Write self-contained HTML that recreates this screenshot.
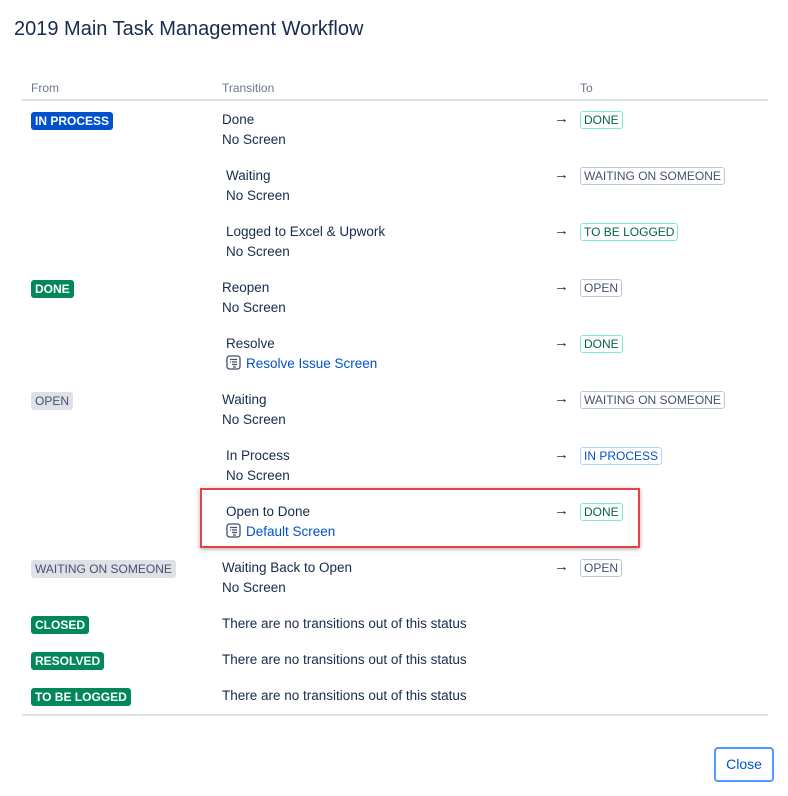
<!DOCTYPE html>
<html><head><meta charset="utf-8"><style>
body{margin:0;width:788px;height:796px;background:#fff;font-family:"Liberation Sans",sans-serif;color:#172b4d;position:relative;overflow:hidden}
.a{position:absolute;white-space:nowrap}
.t{font-size:13.5px;line-height:20px}
.h{font-size:12px;color:#6b778c;line-height:14px}
.lz{position:absolute;font-size:12px;line-height:16px;padding:1px 4px;border-radius:3px;text-transform:uppercase;white-space:nowrap}
.s{font-weight:bold;color:#fff}
.b{background:#0052cc}.g{background:#00875a}.gr{background:#dfe1e6;color:#42526e}
.o{border:1px solid #c1c7d0;color:#42526e;padding:0 3px}
.og{border-color:#79f2c0;color:#006644}
.ob{border-color:#b3d4ff;color:#0052cc}
.lk{color:#0052cc}
.arr{position:absolute;font-size:15px;line-height:18px;left:554px}
.ic{display:inline-block;vertical-align:-2px;margin-right:5px}
</style></head><body>
<div class="a" style="left:14px;top:17px;font-size:20px;line-height:24px;color:#172b4d">2019 Main Task Management Workflow</div>
<div class="a h" style="left:31px;top:81px">From</div>
<div class="a h" style="left:222px;top:81px">Transition</div>
<div class="a h" style="left:580px;top:81px">To</div>
<div class="a" style="left:22px;top:99px;width:746px;height:2px;background:#dfe1e6"></div>

<div class="lz s b" style="left:31px;top:112px">In Process</div>
<div class="lz s g" style="left:31px;top:280px">Done</div>
<div class="lz gr" style="left:31px;top:392px">Open</div>
<div class="lz gr" style="left:31px;top:560px">Waiting on someone</div>
<div class="lz s g" style="left:31px;top:616px">Closed</div>
<div class="lz s g" style="left:31px;top:652px">Resolved</div>
<div class="lz s g" style="left:31px;top:688px">To be logged</div>

<div class="a t" style="left:222px;top:110px">Done<br>No Screen</div>
<div class="a t" style="left:226px;top:166px">Waiting<br>No Screen</div>
<div class="a t" style="left:226px;top:222px">Logged to Excel &amp; Upwork<br>No Screen</div>
<div class="a t" style="left:222px;top:278px">Reopen<br>No Screen</div>
<div class="a t" style="left:226px;top:334px">Resolve<br><svg class="ic" width="15" height="15" viewBox="0 0 15 15"><rect x="1" y="1" width="13" height="13" rx="2.5" fill="none" stroke="#42526e" stroke-width="1.3"/><path d="M4 4.5h7M6 7h5M6 9.5h5M4 7h1M7 12h3" stroke="#42526e" stroke-width="1.2"/></svg><span class="lk">Resolve Issue Screen</span></div>
<div class="a t" style="left:222px;top:390px">Waiting<br>No Screen</div>
<div class="a t" style="left:226px;top:446px">In Process<br>No Screen</div>
<div class="a t" style="left:226px;top:502px">Open to Done<br><svg class="ic" width="15" height="15" viewBox="0 0 15 15"><rect x="1" y="1" width="13" height="13" rx="2.5" fill="none" stroke="#42526e" stroke-width="1.3"/><path d="M4 4.5h7M6 7h5M6 9.5h5M4 7h1M7 12h3" stroke="#42526e" stroke-width="1.2"/></svg><span class="lk">Default Screen</span></div>
<div class="a t" style="left:222px;top:558px">Waiting Back to Open<br>No Screen</div>
<div class="a t" style="left:222px;top:614px">There are no transitions out of this status</div>
<div class="a t" style="left:222px;top:650px">There are no transitions out of this status</div>
<div class="a t" style="left:222px;top:686px">There are no transitions out of this status</div>

<div class="arr" style="top:110px">→</div>
<div class="arr" style="top:166px">→</div>
<div class="arr" style="top:222px">→</div>
<div class="arr" style="top:278px">→</div>
<div class="arr" style="top:334px">→</div>
<div class="arr" style="top:390px">→</div>
<div class="arr" style="top:446px">→</div>
<div class="arr" style="top:502px">→</div>
<div class="arr" style="top:558px">→</div>

<div class="lz o og" style="left:580px;top:111px">Done</div>
<div class="lz o" style="left:580px;top:167px">Waiting on someone</div>
<div class="lz o og" style="left:580px;top:223px">To be logged</div>
<div class="lz o" style="left:580px;top:279px">Open</div>
<div class="lz o og" style="left:580px;top:335px">Done</div>
<div class="lz o" style="left:580px;top:391px">Waiting on someone</div>
<div class="lz o ob" style="left:580px;top:447px">In Process</div>
<div class="lz o og" style="left:580px;top:503px">Done</div>
<div class="lz o" style="left:580px;top:559px">Open</div>

<div class="a" style="left:200px;top:488px;width:436px;height:56px;border:2px solid #e5434a;box-shadow:0 1px 4px rgba(0,0,0,0.35)"></div>

<div class="a" style="left:22px;top:714px;width:746px;height:2px;background:#dfe1e6"></div>
<div class="a" style="left:714px;top:747px;width:56px;height:31px;border:2px solid #4c9aff;border-radius:4px;color:#0052cc;font-size:14px;line-height:31px;text-align:center">Close</div>
</body></html>
